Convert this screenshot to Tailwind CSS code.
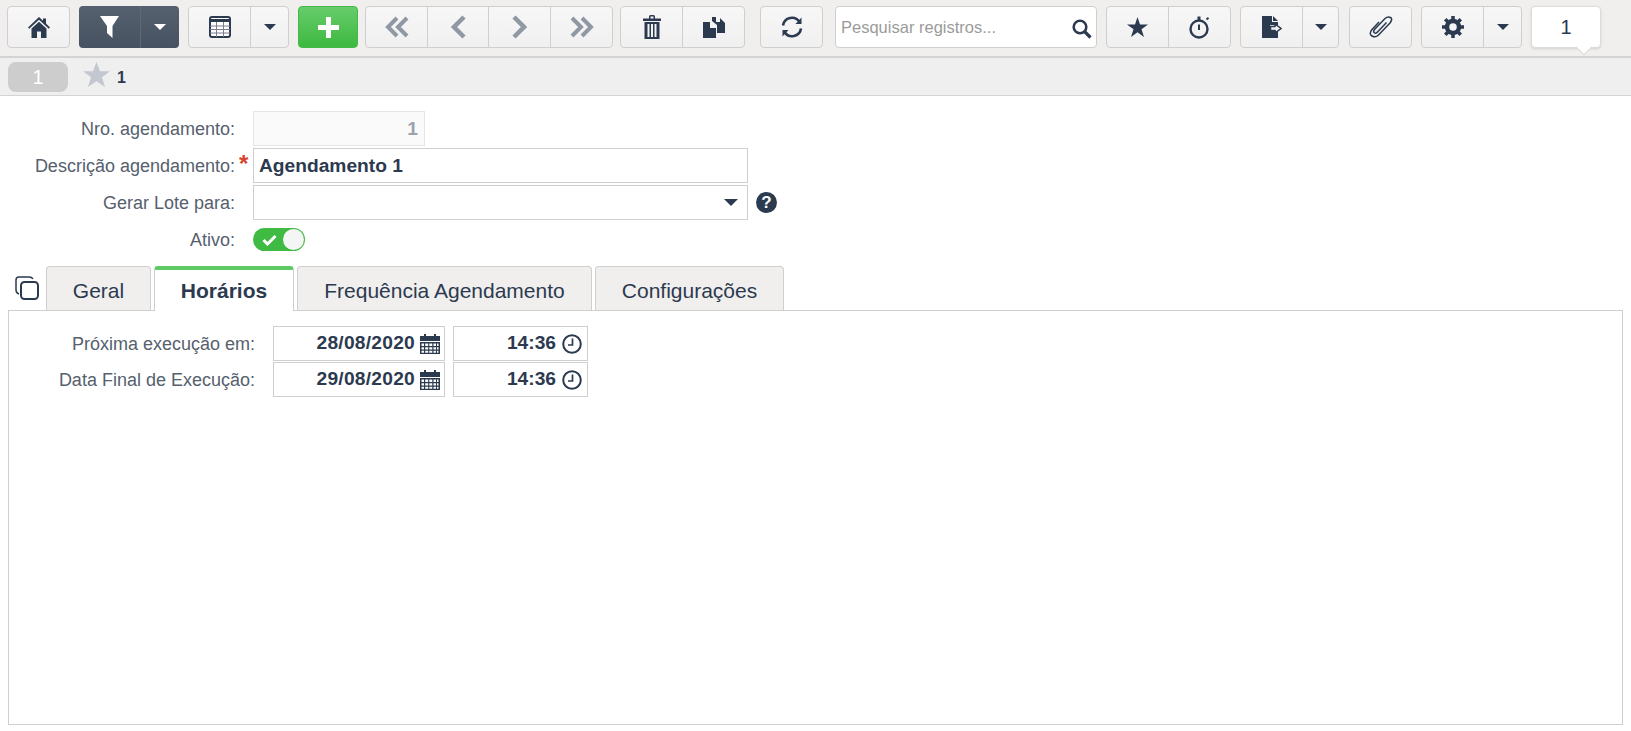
<!DOCTYPE html>
<html lang="pt-BR">
<head>
    <meta charset="UTF-8">
    <meta name="viewport" content="width=device-width, initial-scale=1.0">
    <script src="https://cdn.jsdelivr.net/npm/@tailwindcss/browser@4"></script>
    <title>Agendamento</title>
</head>
<body class="bg-white h-[731px] overflow-hidden font-['Liberation_Sans',Arial,sans-serif] text-[#2c3a50]">

    <!-- Toolbar -->
    <header class="h-[58px] pt-[6px] pl-[7px] flex items-start bg-[#f0efee] border-b-2 border-[#d4d4d4]">
        <button class="w-[63px] h-[42px] flex items-center justify-center rounded-[4px] border border-[#cfcfcf] bg-gradient-to-b from-[#f7f7f7] to-[#f0f0f0]">
            <svg width="22" height="22" viewBox="0 0 22 22" fill="#2c3a50"><path d="M11 1 15 4.800V2.500H18V7.600L22 11.500 20.800 12.800 11 3.800 1.200 12.800 0 11.500Z"/><path d="M3.500 12.500 11 5.800 18.500 12.500V22H13V15.500H9V22H3.500Z"/></svg>
        </button>

        <div class="ml-[9px] w-[100px] h-[42px] flex rounded-[4px] bg-gradient-to-b from-[#56616f] to-[#465261]">
            <div class="w-[62px] flex items-center justify-center border-r border-[#5e6975]">
                <svg width="20" height="22" viewBox="0 0 20 22" fill="#fff"><path d="M0 0H19L12.500 10V22L7 17V10Z"/></svg>
            </div>
            <div class="flex-1 flex items-center justify-center">
                <svg width="12" height="6" viewBox="0 0 12 6" fill="#fff"><path d="M0 0H12L6 6Z"/></svg>
            </div>
        </div>

        <div class="ml-[9px] w-[101px] h-[42px] flex rounded-[4px] border border-[#cfcfcf] bg-gradient-to-b from-[#f7f7f7] to-[#f0f0f0]">
            <div class="w-[62px] flex items-center justify-center border-r border-[#cfcfcf]">
                <svg width="22" height="22" viewBox="0 0 22 22" fill="none"><rect x="1" y="1" width="20" height="20" rx="2" fill="#fff" stroke="#2c3a50" stroke-width="2"/><path d="M1 4.500H21" stroke="#2c3a50" stroke-width="3"/><path d="M1 10H21M1 13.500H21M1 17H21M7.500 6V21M14.500 6V21" stroke="#7d7d92" stroke-width="1"/></svg>
            </div>
            <div class="flex-1 flex items-center justify-center">
                <svg width="12" height="6" viewBox="0 0 12 6" fill="#2c3a50"><path d="M0 0H12L6 6Z"/></svg>
            </div>
        </div>

        <button class="ml-[9px] w-[60px] h-[42px] flex items-center justify-center rounded-[4px] border border-[#45b84a] bg-gradient-to-b from-[#66cc6a] to-[#3cb83f]">
            <svg width="21" height="21" viewBox="0 0 21 21" fill="#fff"><path d="M8 0H13V8H21V13H13V21H8V13H0V8H8Z"/></svg>
        </button>

        <div class="ml-[7px] w-[248px] h-[42px] flex rounded-[4px] border border-[#cfcfcf] bg-gradient-to-b from-[#f7f7f7] to-[#f0f0f0]">
            <div class="w-[62px] flex items-center justify-center border-r border-[#cfcfcf]">
                <svg width="24" height="22" viewBox="0 0 24 22" fill="none" stroke="#8f98a3" stroke-width="4"><path d="M12 2 3 11 12 20M22 2 13 11 22 20"/></svg>
            </div>
            <div class="w-[61px] flex items-center justify-center border-r border-[#cfcfcf]">
                <svg width="15" height="24" viewBox="0 0 15 24" fill="none" stroke="#8f98a3" stroke-width="4.500"><path d="M13 2 3 12 13 22"/></svg>
            </div>
            <div class="w-[62px] flex items-center justify-center border-r border-[#cfcfcf]">
                <svg width="15" height="24" viewBox="0 0 15 24" fill="none" stroke="#8f98a3" stroke-width="4.500"><path d="M2 2 12 12 2 22"/></svg>
            </div>
            <div class="flex-1 flex items-center justify-center">
                <svg width="24" height="22" viewBox="0 0 24 22" fill="none" stroke="#8f98a3" stroke-width="4"><path d="M2 2 11 11 2 20M12 2 21 11 12 20"/></svg>
            </div>
        </div>

        <div class="ml-[7px] w-[125px] h-[42px] flex rounded-[4px] border border-[#cfcfcf] bg-gradient-to-b from-[#f7f7f7] to-[#f0f0f0]">
            <div class="w-[62px] flex items-center justify-center border-r border-[#cfcfcf]">
                <svg width="18" height="24" viewBox="0 0 18 24" fill="#2c3a50"><path d="M0 3.500H6V1.500Q6 0 7.500 0H10.500Q12 0 12 1.500V3.500H18V6H0ZM7.500 1.500V3.500H10.500V1.500Z"/><path d="M1.500 7H16.500V24H1.500ZM4.500 9V22H6.500V9ZM8 9V22H10V9ZM11.500 9V22H13.500V9Z" fill-rule="evenodd"/></svg>
            </div>
            <div class="flex-1 flex items-center justify-center">
                <svg width="22" height="21" viewBox="0 0 22 21" fill="#2c3a50"><path d="M9 0 13 0 13 5 17 5 17 1 22 6V16H14V8L9 4Z"/><path d="M0 5H7V11H13V21H0Z"/></svg>
            </div>
        </div>

        <button class="ml-[15px] w-[63px] h-[42px] flex items-center justify-center rounded-[4px] border border-[#cfcfcf] bg-gradient-to-b from-[#f7f7f7] to-[#f0f0f0]">
            <svg width="22" height="22" viewBox="0 0 22 22" fill="none" stroke="#2c3a50" stroke-width="2.600"><path d="M2 9.500A9 9 0 0 1 18.500 6M20 12.500A9 9 0 0 1 3.500 16"/><path d="M20.500 1.500V8H14.500M1.500 20.500V14H7.500" stroke-width="0" fill="#2c3a50"/></svg>
        </button>

        <div class="relative ml-[12px] w-[262px] h-[42px]">
            <input type="text" placeholder="Pesquisar registros..." class="w-full h-full pl-[5px] pr-8 text-[16.5px] rounded-[4px] border border-[#cfcfcf] bg-white placeholder:text-[#9b9b9b]">
            <svg class="absolute right-[5px] top-[13px]" width="20" height="20" viewBox="0 0 20 20" fill="none" stroke="#2c3a50"><circle cx="8" cy="8" r="6.300" stroke-width="2.600"/><path d="M12.500 12.500 18.500 18.500" stroke-width="3.200"/></svg>
        </div>

        <div class="ml-[9px] w-[125px] h-[42px] flex rounded-[4px] border border-[#cfcfcf] bg-gradient-to-b from-[#f7f7f7] to-[#f0f0f0]">
            <div class="w-[62px] flex items-center justify-center border-r border-[#cfcfcf]">
                <svg width="21" height="20" viewBox="0 0 21 20" fill="#2c3a50"><path d="M10.500 0 13 7.500H21L14.500 12.200 17 20 10.500 15.200 4 20 6.500 12.200 0 7.500H8Z"/></svg>
            </div>
            <div class="flex-1 flex items-center justify-center">
                <svg width="22" height="24" viewBox="0 0 22 24" fill="none" stroke="#2c3a50"><circle cx="10" cy="14" r="8.500" stroke-width="2.400"/><path d="M10 9.500V15" stroke-width="2"/><path d="M10 1.500V5" stroke-width="3"/><path d="M17.500 4.500 19.500 2.800" stroke-width="2"/></svg>
            </div>
        </div>

        <div class="ml-[9px] w-[99px] h-[42px] flex rounded-[4px] border border-[#cfcfcf] bg-gradient-to-b from-[#f7f7f7] to-[#f0f0f0]">
            <div class="w-[62px] flex items-center justify-center border-r border-[#cfcfcf]">
                <svg width="20" height="22" viewBox="0 0 20 22"><path d="M0 0H10V6H16V9H8V15H16V22H0Z" fill="#2c3a50"/><path d="M11 0 16 5H11Z" fill="#2c3a50"/><path d="M8.500 10.500H13V8L19 12.500 13 17V14.500H8.500Z" fill="none" stroke="#2c3a50" stroke-width="1.500"/></svg>
            </div>
            <div class="flex-1 flex items-center justify-center">
                <svg width="12" height="6" viewBox="0 0 12 6" fill="#2c3a50"><path d="M0 0H12L6 6Z"/></svg>
            </div>
        </div>

        <button class="ml-[10px] w-[63px] h-[42px] flex items-center justify-center rounded-[4px] border border-[#cfcfcf] bg-gradient-to-b from-[#f7f7f7] to-[#f0f0f0]">
            <svg width="24" height="22" viewBox="0 0 24 22" fill="none" stroke="#2c3a50" stroke-width="1.500"><path d="M10 6 3 13.500Q-0.500 18 3 20T9.500 19L21 7Q24 3 21.500 1.500T16 2.500L5.500 13.500Q4 16 5.500 17T9 15.500L17.500 6.500"/></svg>
        </button>

        <div class="ml-[9px] w-[101px] h-[42px] flex rounded-[4px] border border-[#cfcfcf] bg-gradient-to-b from-[#f7f7f7] to-[#f0f0f0]">
            <div class="w-[62px] flex items-center justify-center border-r border-[#cfcfcf]">
                <svg width="22" height="22" viewBox="0 0 22 22" fill="none" stroke="#2c3a50"><circle cx="11" cy="11" r="6" stroke-width="4.500"/><path d="M11 0V22M0 11H22M3.200 3.200 18.800 18.800M18.800 3.200 3.200 18.800" stroke-width="3.500" stroke-dasharray="4 14"/></svg>
            </div>
            <div class="flex-1 flex items-center justify-center">
                <svg width="12" height="6" viewBox="0 0 12 6" fill="#2c3a50"><path d="M0 0H12L6 6Z"/></svg>
            </div>
        </div>

        <div class="relative ml-[9px] w-[70px] h-[42px] flex items-center justify-center text-[20px] rounded-[4px] border border-[#dcdcdc] bg-white shadow-sm">
            1
            <span class="absolute left-[46px] top-[34px] w-[12px] h-[12px] rotate-45 bg-white border-r border-b border-[#d8d8d8]"></span>
        </div>
    </header>

    <!-- Record bar -->
    <div class="h-[38px] pl-[8px] flex items-center bg-[#efefef] border-b border-[#d4d4d4]">
        <span class="w-[60px] h-[30px] flex items-center justify-center rounded-[8px] bg-[#cdcdcd] text-white text-[20px]">1</span>
        <svg class="ml-[15px] -mt-[5px]" width="27" height="25" viewBox="0 0 27 25" fill="#c3c7cf"><path d="M13.500 0 17 9.200H27L19 15.200 22 25 13.500 19.200 5 25 8 15.200 0 9.200H10Z"/></svg>
        <span class="ml-[7px] mt-[3px] text-[16px] font-bold">1</span>
    </div>

    <!-- Form -->
    <main class="pt-[15px]">
        <div class="flex items-center h-[35px]">
            <label class="w-[235px] pt-px text-right text-[18px] text-[#56606e]">Nro. agendamento:</label>
            <div class="ml-[18px] w-[172px] h-[35px] pt-px px-[6px] flex items-center justify-end border border-[#e6e6e6] bg-[#fafafa] text-[19.2px] font-bold text-[#9aa2ad]">1</div>
        </div>
        <div class="flex items-center h-[35px] mt-[2px]">
            <label class="w-[235px] pt-px text-right text-[18px] text-[#56606e]">Descrição agendamento:</label>
            <span class="relative w-[18px] pl-[4px] text-[24px] leading-none font-bold text-[#d8432f] -mt-[4px]">*</span>
            <div class="w-[495px] h-[35px] pt-px px-[5px] flex items-center border border-[#cfcfcf] text-[19.2px] font-bold">Agendamento 1</div>
        </div>
        <div class="flex items-center h-[35px] mt-[2px]">
            <label class="w-[235px] pt-px text-right text-[18px] text-[#56606e]">Gerar Lote para:</label>
            <div class="ml-[18px] w-[495px] h-[35px] pr-[9px] flex items-center justify-end border border-[#cfcfcf]">
                <svg width="14" height="7" viewBox="0 0 14 7" fill="#2c3a50"><path d="M0 0H14L7 7Z"/></svg>
            </div>
            <span class="ml-[8px] w-[21px] h-[21px] flex items-center justify-center rounded-full bg-[#2c3a50] text-white text-[17px] font-bold">?</span>
        </div>
        <div class="flex items-center h-[24px] mt-[8px]">
            <label class="w-[235px] text-right text-[18px] text-[#56606e]">Ativo:</label>
            <div class="ml-[18px] -mt-px w-[52px] h-[23px] pl-[9px] pr-[1px] flex items-center justify-between rounded-full bg-[#3fbb43]">
                <svg width="15" height="12" viewBox="0 0 15 12" fill="none" stroke="#fff" stroke-width="3"><path d="M1.500 6 5.500 10 13.500 2"/></svg>
                <span class="w-[21px] h-[21px] rounded-full bg-[#f5f5f5]"></span>
            </div>
        </div>

        <!-- Tabs -->
        <div class="flex items-end h-[44px] mt-[14px] pl-[15px]">
            <svg class="mb-[10px]" width="24" height="24" viewBox="0 0 24 24" fill="none" stroke="#2c3a50" stroke-width="1.500"><rect x="6" y="6" width="17" height="17" rx="3.500" stroke-width="2"/><path d="M4 18Q1 17 1 14V4Q1 1 4 1H14Q17 1 18 3"/></svg>
            <div class="ml-[7px] w-[105px] h-[44px] pt-[5px] flex items-center justify-center rounded-t-[4px] border border-b-0 border-[#cfcfcf] bg-[#f0efee] text-[21px]">Geral</div>
            <div class="relative z-10 ml-[3px] w-[140px] h-[45px] -mb-px pt-[1px] flex items-center justify-center rounded-t-[4px] border-x border-[#cfcfcf] border-t-4 border-t-[#5fcb63] bg-white text-[21px] font-bold">Horários</div>
            <div class="ml-[3px] w-[295px] h-[44px] pt-[5px] flex items-center justify-center rounded-t-[4px] border border-b-0 border-[#cfcfcf] bg-[#f0efee] text-[21px]">Frequência Agendamento</div>
            <div class="ml-[3px] w-[189px] h-[44px] pt-[5px] flex items-center justify-center rounded-t-[4px] border border-b-0 border-[#cfcfcf] bg-[#f0efee] text-[21px]">Configurações</div>
        </div>

        <!-- Tab panel -->
        <section class="mx-[8px] w-[1615px] h-[415px] pt-[15px] border border-[#cfcfcf]">
            <div class="flex items-center h-[35px]">
                <label class="w-[246px] pt-px text-right text-[18px] text-[#56606e]">Próxima execução em:</label>
                <div class="ml-[18px] w-[172px] h-[35px] pr-[4px] flex items-center justify-end gap-[5px] border border-[#cfcfcf] text-[19.2px] font-bold tracking-[0.25px]">
                    28/08/2020
                    <svg width="20" height="20" viewBox="0 0 20 20"><path d="M0 2H4V0H6V2H14V0H16V2H20V7H0Z" fill="#2c3a50"/><path d="M0 8H20V20H0ZM1.500 9.500V12H4V9.500ZM5.200 9.500V12H8.200V9.500ZM9.300 9.500V12H12.300V9.500ZM13.500 9.500V12H16V9.500ZM17 9.500V12H18.500V9.500ZM1.500 13.200V15.500H4V13.200ZM5.200 13.200V15.500H8.200V13.200ZM9.300 13.200V15.500H12.300V13.200ZM13.500 13.200V15.500H16V13.200ZM17 13.200V15.500H18.500V13.200ZM1.500 16.700V18.700H4V16.700ZM5.200 16.700V18.700H8.200V16.700ZM9.300 16.700V18.700H12.300V16.700ZM13.500 16.700V18.700H16V16.700ZM17 16.700V18.700H18.500V16.700Z" fill="#2c3a50" fill-rule="evenodd"/></svg>
                </div>
                <div class="ml-[8px] w-[135px] h-[35px] pr-[5px] flex items-center justify-end gap-[6px] border border-[#cfcfcf] text-[19.2px] font-bold">
                    14:36
                    <svg width="20" height="20" viewBox="0 0 20 20" fill="none" stroke="#2c3a50" stroke-width="2"><circle cx="10" cy="10" r="8.800"/><path d="M10.500 4.500V11H6" stroke-width="1.700"/></svg>
                </div>
            </div>
            <div class="flex items-center h-[35px] mt-[1px]">
                <label class="w-[246px] pt-px text-right text-[18px] text-[#56606e]">Data Final de Execução:</label>
                <div class="ml-[18px] w-[172px] h-[35px] pr-[4px] flex items-center justify-end gap-[5px] border border-[#cfcfcf] text-[19.2px] font-bold tracking-[0.25px]">
                    29/08/2020
                    <svg width="20" height="20" viewBox="0 0 20 20"><path d="M0 2H4V0H6V2H14V0H16V2H20V7H0Z" fill="#2c3a50"/><path d="M0 8H20V20H0ZM1.500 9.500V12H4V9.500ZM5.200 9.500V12H8.200V9.500ZM9.300 9.500V12H12.300V9.500ZM13.500 9.500V12H16V9.500ZM17 9.500V12H18.500V9.500ZM1.500 13.200V15.500H4V13.200ZM5.200 13.200V15.500H8.200V13.200ZM9.300 13.200V15.500H12.300V13.200ZM13.500 13.200V15.500H16V13.200ZM17 13.200V15.500H18.500V13.200ZM1.500 16.700V18.700H4V16.700ZM5.200 16.700V18.700H8.200V16.700ZM9.300 16.700V18.700H12.300V16.700ZM13.500 16.700V18.700H16V16.700ZM17 16.700V18.700H18.500V16.700Z" fill="#2c3a50" fill-rule="evenodd"/></svg>
                </div>
                <div class="ml-[8px] w-[135px] h-[35px] pr-[5px] flex items-center justify-end gap-[6px] border border-[#cfcfcf] text-[19.2px] font-bold">
                    14:36
                    <svg width="20" height="20" viewBox="0 0 20 20" fill="none" stroke="#2c3a50" stroke-width="2"><circle cx="10" cy="10" r="8.800"/><path d="M10.500 4.500V11H6" stroke-width="1.700"/></svg>
                </div>
            </div>
        </section>
    </main>

</body>
</html>
